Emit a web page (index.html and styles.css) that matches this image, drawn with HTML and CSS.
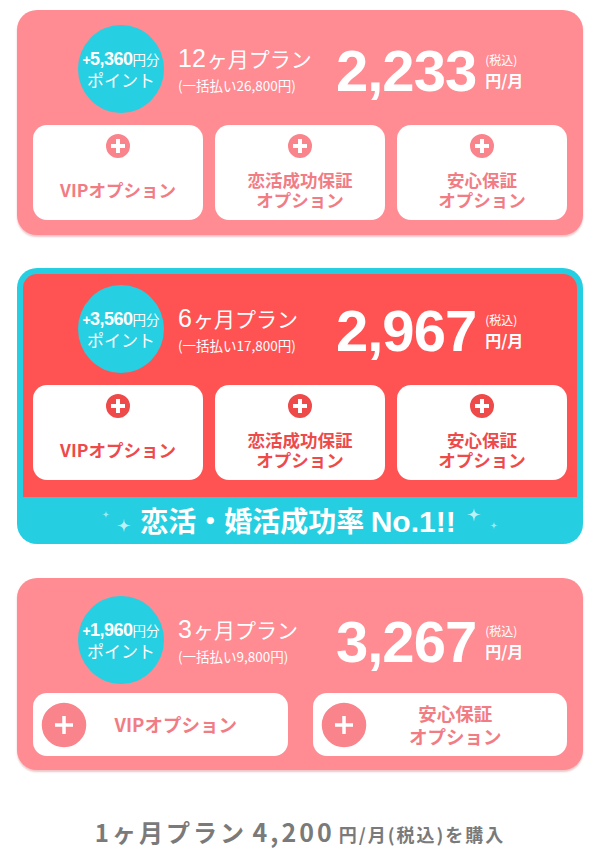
FILE: index.html
```html
<!DOCTYPE html>
<html>
	<head>
		<meta charset="utf-8">
		<title>プラン選択</title>
		<link rel="stylesheet" href="styles.css">
	</head>
	<body>
		<div class="plans">
			<!-- 12ヶ月 -->
			<div class="plan">
				<div class="plan-head">
					<div class="point">
						<p class="point-num"><b><i>+</i>5,360</b>円分</p>
						<p class="point-txt">ポイント</p>
					</div>
					<div class="plan-name">
						<p class="name"><span class="n">12</span>ヶ月プラン</p>
						<p class="lump">(一括払い26,800円)</p>
					</div>
					<div class="price">
						<span class="price-num">2,233</span>
						<span class="price-unit"><small>(税込)</small>円/月</span>
					</div>
				</div>
				<ul class="options">
					<li><svg class="plus" viewBox="0 0 28 28"><circle cx="14" cy="14" r="14"/><path d="M7 14h14M14 7v14"/></svg><span>VIPオプション</span></li>
					<li><svg class="plus" viewBox="0 0 28 28"><circle cx="14" cy="14" r="14"/><path d="M7 14h14M14 7v14"/></svg><span>恋活成功保証<br>オプション</span></li>
					<li><svg class="plus" viewBox="0 0 28 28"><circle cx="14" cy="14" r="14"/><path d="M7 14h14M14 7v14"/></svg><span>安心保証<br>オプション</span></li>
				</ul>
			</div>

			<!-- 6ヶ月 おすすめ -->
			<div class="best">
				<div class="plan plan-red">
					<div class="plan-head">
						<div class="point">
							<p class="point-num"><b><i>+</i>3,560</b>円分</p>
							<p class="point-txt">ポイント</p>
						</div>
						<div class="plan-name">
							<p class="name"><span class="n">6</span>ヶ月プラン</p>
							<p class="lump">(一括払い17,800円)</p>
						</div>
						<div class="price">
							<span class="price-num">2,967</span>
							<span class="price-unit"><small>(税込)</small>円/月</span>
						</div>
					</div>
					<ul class="options">
						<li><svg class="plus" viewBox="0 0 28 28"><circle cx="14" cy="14" r="14"/><path d="M7 14h14M14 7v14"/></svg><span>VIPオプション</span></li>
						<li><svg class="plus" viewBox="0 0 28 28"><circle cx="14" cy="14" r="14"/><path d="M7 14h14M14 7v14"/></svg><span>恋活成功保証<br>オプション</span></li>
						<li><svg class="plus" viewBox="0 0 28 28"><circle cx="14" cy="14" r="14"/><path d="M7 14h14M14 7v14"/></svg><span>安心保証<br>オプション</span></li>
					</ul>
				</div>
				<p class="banner">
					<svg class="spark" width="30" height="24" viewBox="0 0 30 24"><path class="sm" d="M5 2.5Q5 6.5 9 6.5Q5 6.5 5 10.5Q5 6.5 1 6.5Q5 6.5 5 2.5Z"/><path d="M23 10.5Q23 17.5 30 17.5Q23 17.5 23 24.5Q23 17.5 16 17.5Q23 17.5 23 10.5Z"/></svg>
					<span>恋活・婚活成功率 <em>No.1!!</em></span>
					<svg class="spark" width="32" height="24" viewBox="0 0 32 24"><path d="M7 -0.5Q7 6.5 14 6.5Q7 6.5 7 13.5Q7 6.5 0 6.5Q7 6.5 7 -0.5Z"/><path class="sm" d="M27 13.5Q27 17.5 31 17.5Q27 17.5 27 21.5Q27 17.5 23 17.5Q27 17.5 27 13.5Z"/></svg>
				</p>
			</div>

			<!-- 3ヶ月 -->
			<div class="plan plan-short">
				<div class="plan-head">
					<div class="point">
						<p class="point-num"><b><i>+</i>1,960</b>円分</p>
						<p class="point-txt">ポイント</p>
					</div>
					<div class="plan-name">
						<p class="name"><span class="n">3</span>ヶ月プラン</p>
						<p class="lump">(一括払い9,800円)</p>
					</div>
					<div class="price">
						<span class="price-num">3,267</span>
						<span class="price-unit"><small>(税込)</small>円/月</span>
					</div>
				</div>
				<ul class="options options-wide">
					<li><svg class="plus" viewBox="0 0 48 48"><circle cx="24" cy="24" r="24"/><path d="M15 24h18M24 15v18"/></svg><span>VIPオプション</span></li>
					<li><svg class="plus" viewBox="0 0 48 48"><circle cx="24" cy="24" r="24"/><path d="M15 24h18M24 15v18"/></svg><span>安心保証<br>オプション</span></li>
				</ul>
			</div>
		</div>

		<p class="buy"><span class="buy-plan">1ヶ月プラン</span> <span class="buy-price">4,200</span><small>円/月(税込)を購入</small></p>
	</body>
</html>
```

FILE: styles.css
```css
*{
	padding: 0;
	margin: 0;
	list-style: none;
	box-sizing: border-box;
}
body{
	font-family: "Noto Sans CJK JP", sans-serif;
	background: #fff;
	color: #fff;
}
.plans{
	padding: 10px 17px 0;
}
.plan{
	background: #ff8b93;
	border-radius: 20px;
	padding: 15px 16px;
	box-shadow: 0 2px 2px rgba(200, 90, 98, .35);
}
.plan-head{
	display: flex;
	align-items: center;
	gap: 14px;
	height: 88px;
}
.point{
	margin-left: 45px;
	width: 86px;
	height: 88px;
	flex-shrink: 0;
	border-radius: 50%;
	background: #26cfe1;
	display: flex;
	flex-direction: column;
	align-items: center;
	justify-content: center;
	white-space: nowrap;
	line-height: 1.05;
}
.point-num{
	font-size: 13.5px;
	margin-left: -2px;
	margin-right: -2px;
}
.point-num b{
	font-family: "Liberation Sans", sans-serif;
	font-size: 18px;
	letter-spacing: -.5px;
}
.point-num i{
	font-style: normal;
	font-size: 14px;
}
.point-txt{
	font-size: 17px;
	margin-top: 2px;
}
.plan-name{
	width: 144px;
	white-space: nowrap;
}
.name{
	font-size: 21px;
	line-height: 28px;
}
.name .n{
	font-family: "Liberation Sans", sans-serif;
	font-size: 25px;
	margin-right: 1px;
}
.lump{
	font-size: 13.5px;
	margin-top: 3px;
}
.price{
	display: flex;
	align-items: center;
	margin-top: 4px;
}
.price-num{
	font-family: "Liberation Sans", sans-serif;
	font-weight: bold;
	font-size: 58px;
	letter-spacing: -1px;
	line-height: 1;
}
.price-unit{
	display: flex;
	flex-direction: column;
	margin-left: 9px;
	font-size: 16px;
	font-weight: bold;
	line-height: 1.1;
}
.price-unit small{
	font-size: 12px;
	font-weight: normal;
	margin-bottom: 6px;
}
.options{
	display: flex;
	gap: 12px;
	margin-top: 12px;
}
.options li{
	flex: 1;
	height: 95px;
	background: #fff;
	border-radius: 14px;
	padding-top: 7px;
	display: flex;
	flex-direction: column;
	align-items: center;
	color: #f27c84;
	font-size: 17.5px;
	font-weight: bold;
	line-height: 20px;
	text-align: center;
}
.options li span{
	flex: 1;
	display: flex;
	align-items: center;
	justify-content: center;
}
.plus{
	width: 28px;
	height: 28px;
	flex-shrink: 0;
	fill: #fa848c;
	stroke: #fff;
	stroke-width: 4;
}
/* 6ヶ月 */
.best{
	margin-top: 33px;
	background: #25cfe1;
	border-radius: 20px;
	padding: 6px 6px 0;
}
.plan-red{
	background: #ff5353;
	border-radius: 14px 14px 0 0;
	padding: 11px 10px 17px;
	box-shadow: none;
}
.plan-red .options li{
	color: #ee4a4a;
}
.plan-red .plus{
	fill: #ee4a4a;
}
.banner{
	height: 47px;
	display: flex;
	align-items: center;
	justify-content: center;
	font-size: 28px;
	font-weight: bold;
	padding-bottom: 2px;
}
.banner em{
	font-style: normal;
	font-family: "Liberation Sans", sans-serif;
	font-size: 30px;
}
.spark{
	fill: rgba(255, 255, 255, .7);
}
.spark .sm{
	fill: rgba(255, 255, 255, .55);
}
.banner .spark:first-child{
	margin-right: 9px;
}
.banner .spark:last-child{
	margin-left: 11px;
}
/* 3ヶ月 */
.plan-short{
	margin-top: 34px;
	padding: 18px 16px 14px;
}
.options-wide{
	gap: 25px;
	margin-top: 9px;
}
.options-wide li{
	height: 63px;
	flex-direction: row;
	padding: 0 24px 0 7px;
	font-size: 18.5px;
	line-height: 23px;
}
.options-wide .plus{
	width: 48px;
	height: 48px;
	stroke-width: 3.5;
}
.buy{
	margin-top: 46px;
	text-align: center;
	color: #7a7a7a;
	font-weight: bold;
	letter-spacing: 2px;
	line-height: 30px;
}
.buy-plan{
	font-size: 24px;
	letter-spacing: 3px;
}
.buy-price{
	font-size: 25px;
	letter-spacing: 3px;
	margin-right: 4px;
}
.buy small{
	font-size: 18px;
}
```
